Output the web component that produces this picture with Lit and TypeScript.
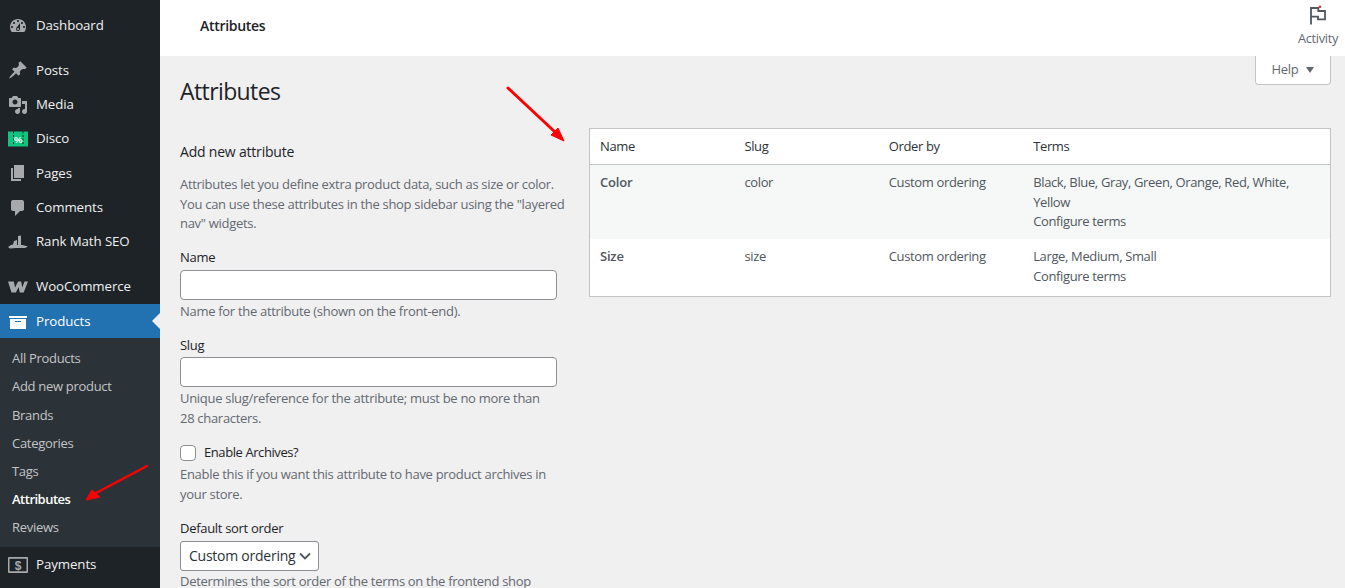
import { LitElement, html, css, svg } from 'lit';
import { customElement } from 'lit/decorators.js';

const icons: Record<string, unknown> = {
  dashboard: svg`<path d="M3.76 16h12.48c1.1-1.37 1.76-3.11 1.76-5 0-4.42-3.58-8-8-8s-8 3.58-8 8c0 1.89.66 3.63 1.76 5zM10 4c.55 0 1 .45 1 1s-.45 1-1 1-1-.45-1-1 .45-1 1-1zM6 6c.55 0 1 .45 1 1s-.45 1-1 1-1-.45-1-1 .45-1 1-1zm8 0c.55 0 1 .45 1 1s-.45 1-1 1-1-.45-1-1 .45-1 1-1zm-5.37 5.55L12 7v6c0 1.1-.9 2-2 2s-2-.9-2-2c0-.57.24-1.08.63-1.45zM4 10c.55 0 1 .45 1 1s-.45 1-1 1-1-.45-1-1 .45-1 1-1zm12 0c.55 0 1 .45 1 1s-.45 1-1 1-1-.45-1-1 .45-1 1-1zm-5 3c0-.55-.45-1-1-1s-1 .45-1 1 .45 1 1 1 1-.45 1-1z"/>`,
  posts: svg`<path d="M10.44 3.02l1.82-1.82 6.36 6.35-1.83 1.82c-1.05-.68-2.48-.57-3.41.36l-.75.75c-.92.93-1.04 2.35-.35 3.41l-1.83 1.82-2.41-2.41-2.8 2.79c-.42.42-3.38 2.71-3.8 2.29s1.86-3.39 2.28-3.81l2.79-2.79L4.1 9.36l1.83-1.82c1.05.69 2.48.57 3.4-.36l.75-.75c.93-.92 1.05-2.35.36-3.41z"/>`,
  media: svg`<path d="M13 11V4c0-.55-.45-1-1-1h-1.67L9 1H5L3.67 3H2c-.55 0-1 .45-1 1v7c0 .55.45 1 1 1h10c.55 0 1-.45 1-1zM7 4.5c1.38 0 2.5 1.12 2.5 2.5S8.38 9.5 7 9.5 4.5 8.38 4.5 7 5.62 4.5 7 4.5zM14 6h5v10.5c0 1.38-1.12 2.5-2.5 2.5S14 17.88 14 16.5s1.12-2.5 2.5-2.5c.17 0 .34.02.5.05V9h-3V6zm-4 8.05V13h2v3.5c0 1.38-1.12 2.5-2.5 2.5S7 17.88 7 16.5 8.12 14 9.5 14c.17 0 .34.02.5.05z"/>`,
  disco: svg`<path fill="#0fc47f" d="M0 2.500h20v15H0zM5 2.500v2h1v-2zm0 3.500v2h1V6zm0 3.500v2h1v-2zm0 3.500v2h1v-2zM14.500 2.500v2h1v-2zm0 3.500v2h1V6zm0 3.500v2h1v-2zm0 3.500v2h1v-2z" fill-rule="evenodd"/><text x="10.200" y="13.500" text-anchor="middle" font-size="9.500" font-weight="700" fill="#fff" font-family="'Liberation Sans', sans-serif">%</text>`,
  pages: svg`<path d="M6 15V2h10v13H6zm-1 1h8v2H3V5h2v11z"/>`,
  comments: svg`<path d="M5 2h9c1.1 0 2 .9 2 2v7c0 1.1-.9 2-2 2h-2l-5 5v-5H5c-1.1 0-2-.9-2-2V4c0-1.1.9-2 2-2z"/>`,
  rank: svg`<path d="M0 15l3-2 2-.5 1-3.500 3-1v5h1V4l3-.5V13h1.500l5.500 1.500-3 1.500H8l-6 .5z"/>`,
  woo: svg`<path d="M0 4.500h5.800l1.300 6 2.900-6h3.200l1 6 2.300-6H20l-4.300 11h-4l-1-5.500-2.800 5.500H3.500z"/>`,
  products: svg`<path d="M19 4v2H1V4h18zM2 7h16v10H2V7zm11 3V9H7v1h6z"/>`,
  payments: svg`<path fill-rule="evenodd" d="M1 2h18a1 1 0 011 1v14a1 1 0 01-1 1H1a1 1 0 01-1-1V3a1 1 0 011-1zm.500 1.700v12.600h17V3.700z"/><text x="10" y="14.500" text-anchor="middle" font-size="12" font-weight="700" font-family="'Liberation Sans', sans-serif">$</text>`,
};

const topItems = [
  { label: 'Dashboard', icon: 'dashboard' },
  { sep: true },
  { label: 'Posts', icon: 'posts' },
  { label: 'Media', icon: 'media' },
  { label: 'Disco', icon: 'disco' },
  { label: 'Pages', icon: 'pages' },
  { label: 'Comments', icon: 'comments' },
  { label: 'Rank Math SEO', icon: 'rank' },
  { sep: true },
  { label: 'WooCommerce', icon: 'woo' },
];

const subItems = ['All Products', 'Add new product', 'Brands', 'Categories', 'Tags', 'Attributes', 'Reviews'];

@customElement('app-root')
export class AppRoot extends LitElement {
  static styles = css`
    :host {
      display: block;
      position: relative;
      height: 588px;
      overflow: hidden;
      background: #f0f0f1;
      color: #3c434a;
      font: 13px/19.5px 'Open Sans', sans-serif;
      letter-spacing: -0.3px;
    }
    .layout {
      display: flex;
      height: 100%;
    }

    /* Sidebar */
    .sidebar {
      flex: none;
      width: 160px;
      background: #1d2327;
      padding-top: 8px;
      color: #f0f0f1;
    }
    .item {
      display: flex;
      align-items: center;
      height: 34.3px;
      position: relative;
      font-size: 13.3px;
      letter-spacing: -0.1px;
      padding-top: 1px;
      box-sizing: border-box;
    }
    .item .ico {
      flex: none;
      width: 36px;
      display: flex;
      justify-content: center;
    }
    .item svg {
      width: 20px;
      height: 20px;
      fill: #a7aaad;
    }
    .sep {
      height: 10.5px;
    }
    .item.current {
      background: #2271b1;
      color: #fff;
      margin-top: 0.5px;
    }
    .item.current svg {
      fill: #fff;
    }
    .item.current::after {
      content: '';
      position: absolute;
      right: 0;
      top: 50%;
      margin-top: -8px;
      border: 8px solid transparent;
      border-right-color: #f0f0f1;
      border-left-width: 0;
    }
    .submenu {
      background: #2c3338;
      padding: 6px 0 5.5px;
      color: #c3c4c7;
    }
    .submenu div {
      height: 28.2px;
      line-height: 28.2px;
      padding-left: 12px;
    }
    .submenu .active {
      color: #fff;
      font-weight: 600;
      letter-spacing: -0.5px;
    }

    /* Top bar */
    .main {
      flex: 1;
      min-width: 0;
    }
    .topbar {
      height: 56px;
      background: #fff;
      display: flex;
      justify-content: space-between;
      padding-left: 40px;
      box-sizing: border-box;
    }
    .topbar .crumb {
      color: #1d2327;
      font-weight: 600;
      font-size: 14px;
      margin-top: 16px;
    }
    .activity {
      width: 54px;
      display: flex;
      flex-direction: column;
      align-items: center;
      color: #646970;
      font-size: 12.8px;
      padding-top: 4px;
    }
    .activity svg {
      width: 24px;
      height: 24px;
      margin-bottom: 1px;
    }
    .help-row {
      display: flex;
      justify-content: flex-end;
      padding-right: 14px;
    }
    .help {
      width: 76px;
      height: 29px;
      box-sizing: border-box;
      background: #fff;
      border: 1px solid #c3c4c7;
      border-top: none;
      border-radius: 0 0 4px 4px;
      display: flex;
      align-items: center;
      justify-content: center;
      gap: 8px;
      color: #646970;
    }
    .help i {
      border: 4.5px solid transparent;
      border-top: 6px solid #646970;
      border-bottom: 0;
    }

    /* Content */
    .content {
      display: flex;
      padding: 0 14px 0 20px;
      gap: 32px;
    }
    h1 {
      margin: 0;
      position: absolute;
      left: 180px;
      top: 73px;
      font-size: 23px;
      line-height: 36px;
      font-weight: 400;
      letter-spacing: -0.6px;
      color: #1d2327;
    }
    .col-left {
      flex: none;
      width: 377px;
      padding-top: 58px;
    }
    h2 {
      margin: 0 0 14px;
      font-size: 14px;
      line-height: 18px;
      font-weight: 400;
      color: #1d2327;
      letter-spacing: -0.2px;
    }
    .desc {
      margin: 0;
      color: #646970;
      white-space: nowrap;
    }
    .intro {
      margin-bottom: 14.5px;
    }
    .field {
      margin-bottom: 14.7px;
    }
    .field label {
      display: block;
      color: #1d2327;
    }
    .input {
      display: block;
      box-sizing: border-box;
      width: 100%;
      height: 30px;
      border: 1px solid #8c8f94;
      border-radius: 4px;
      background: #fff;
      margin: 2px 0;
    }
    .check {
      display: flex;
      align-items: center;
      gap: 8px;
      color: #1d2327;
      margin-bottom: 3px;
      letter-spacing: -0.42px;
    }
    .check span {
      width: 16px;
      height: 16px;
      box-sizing: border-box;
      border: 1px solid #8c8f94;
      border-radius: 4px;
      background: #fff;
    }
    .select {
      display: flex;
      align-items: center;
      justify-content: space-between;
      box-sizing: border-box;
      width: 139px;
      height: 30px;
      border: 1px solid #8c8f94;
      border-radius: 3px;
      background: #fff;
      padding: 0 6px 0 8px;
      color: #2c3338;
      margin: 2px 0 1px;
      font-size: 14px;
      letter-spacing: -0.25px;
    }
    .select svg {
      width: 14px;
      height: 14px;
      fill: none;
      stroke: #50575e;
      stroke-width: 1.8;
    }

    /* Table */
    .col-right {
      flex: 1;
      min-width: 0;
      padding-top: 43px;
    }
    table {
      width: 100%;
      border-collapse: separate;
      border-spacing: 0;
      table-layout: fixed;
      background: #fff;
      border: 1px solid #c3c4c7;
      letter-spacing: -0.36px;
    }
    th {
      height: 36px;
      padding: 1px 10px 0;
      box-sizing: border-box;
      font-weight: 400;
      text-align: left;
      color: #2c3338;
      border-bottom: 1px solid #c3c4c7;
    }
    th.short {
      width: 144.4px;
    }
    td {
      padding: 8px 10px 7.5px;
      vertical-align: top;
      color: #50575e;
    }
    tr.alt td {
      background: #f6f7f7;
    }
    td.name {
      font-weight: 600;
      letter-spacing: -0.2px;
    }
    .row2 {
      height: 57px;
    }

    /* Annotation arrows */
    .arrows {
      position: absolute;
      inset: 0;
      width: 100%;
      height: 100%;
      pointer-events: none;
    }
  `;

  render() {
    return html`
      <div class="layout">
        <nav class="sidebar">
          ${topItems.map((m) =>
            m.sep
              ? html`<div class="sep"></div>`
              : html`<div class="item">
                  <span class="ico"><svg viewBox="0 0 20 20">${icons[m.icon!]}</svg></span>${m.label}
                </div>`
          )}
          <div class="item current">
            <span class="ico"><svg viewBox="0 0 20 20">${icons.products}</svg></span>Products
          </div>
          <div class="submenu">
            ${subItems.map((s) => html`<div class=${s === 'Attributes' ? 'active' : ''}>${s}</div>`)}
          </div>
          <div class="item">
            <span class="ico"><svg viewBox="0 0 20 20">${icons.payments}</svg></span>Payments
          </div>
        </nav>

        <div class="main">
          <header class="topbar">
            <div class="crumb">Attributes</div>
            <div class="activity">
              <svg viewBox="0 0 24 24">
                <path fill="none" stroke="#50575e" stroke-width="1.8" d="M5 20.500V4h7.300v3H19v8.300h-7v-2.600H5" />
                <circle cx="14" cy="2.700" r="1.3" fill="#d63638" />
              </svg>
              Activity
            </div>
          </header>
          <div class="help-row">
            <div class="help">Help <i></i></div>
          </div>
          <h1>Attributes</h1>
          <div class="content">
            <div class="col-left">
              <h2>Add new attribute</h2>
              <p class="desc intro">
                Attributes let you define extra product data, such as size or color.<br />You can use these attributes in
                the shop sidebar using the "layered<br />nav" widgets.
              </p>
              <div class="field">
                <label>Name</label>
                <input class="input" />
                <p class="desc">Name for the attribute (shown on the front-end).</p>
              </div>
              <div class="field">
                <label>Slug</label>
                <input class="input" />
                <p class="desc">Unique slug/reference for the attribute; must be no more than<br />28 characters.</p>
              </div>
              <div class="field">
                <div class="check"><span></span>Enable Archives?</div>
                <p class="desc">Enable this if you want this attribute to have product archives in<br />your store.</p>
              </div>
              <div class="field">
                <label>Default sort order</label>
                <div class="select">
                  Custom ordering
                  <svg viewBox="0 0 14 14"><path d="M2 4.500l5 5 5-5" /></svg>
                </div>
                <p class="desc">Determines the sort order of the terms on the frontend shop</p>
              </div>
            </div>
            <div class="col-right">
              <table>
                <thead>
                  <tr><th class="short">Name</th><th class="short">Slug</th><th class="short">Order by</th><th>Terms</th></tr>
                </thead>
                <tbody>
                  <tr class="alt">
                    <td class="name">Color</td>
                    <td>color</td>
                    <td>Custom ordering</td>
                    <td>Black, Blue, Gray, Green, Orange, Red, White, Yellow<br />Configure terms</td>
                  </tr>
                  <tr class="row2">
                    <td class="name">Size</td>
                    <td>size</td>
                    <td>Custom ordering</td>
                    <td>Large, Medium, Small<br />Configure terms</td>
                  </tr>
                </tbody>
              </table>
            </div>
          </div>
        </div>
      </div>
      <svg class="arrows" viewBox="0 0 1345 588">
        <g fill="#f00" stroke="#f00">
          <path d="M508 88L555 132" stroke-width="3" stroke-linecap="round" />
          <path d="M564 141L551 135L558 128z" stroke-width="1" />
          <path d="M147 466L96 493" stroke-width="2.5" stroke-linecap="round" />
          <path d="M86 500L92 490L100 497z" stroke-width="1" />
        </g>
      </svg>
    `;
  }
}
